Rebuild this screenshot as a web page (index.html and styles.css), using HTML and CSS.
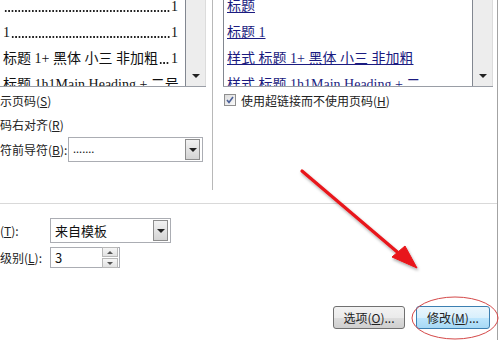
FILE: index.html
```html
<!DOCTYPE html>
<html lang="zh-CN">
<head>
  <meta charset="UTF-8">
  <title>目录</title>
  <link rel="stylesheet" href="styles.css">
</head>
<body>
  <div class="dialog">
    <div class="top">
      <div class="print-pane">
        <div class="listbox">
          <div class="list-items">
            <div class="rows">
              <div class="row"><span class="lead"></span><span>1</span></div>
              <div class="row"><span>1</span><span class="lead"></span><span>1</span></div>
              <div class="row"><span>标题 1+ 黑体 小三 非加粗</span><span class="lead"></span><span>1</span></div>
              <div class="row"><span>标题 1h1Main Heading + 二号</span></div>
            </div>
          </div>
          <div class="scrollbar"><span class="arrow-down"></span></div>
        </div>
        <div class="opt-row">示页码(<u>S</u>)</div>
        <div class="opt-row">码右对齐(<u>R</u>)</div>
        <div class="field-row">
          <span class="field-label">符前导符(<u>B</u>):</span>
          <div class="select leader-select">
            <span class="select-text">.......</span>
            <span class="select-btn"><span class="arrow-down"></span></span>
          </div>
        </div>
      </div>
      <div class="web-pane">
        <div class="listbox web-list">
          <div class="list-items">
            <div class="rows">
              <div class="row link">标题</div>
              <div class="row link">标题 1</div>
              <div class="row link">样式 标题 1+ 黑体 小三 非加粗</div>
              <div class="row link">样式 标题 1h1Main Heading + 二</div>
            </div>
          </div>
          <div class="scrollbar"><span class="arrow-down"></span></div>
        </div>
        <div class="check-row">
          <span class="checkbox">
            <svg width="8" height="8" viewBox="0 0 8 8"><path d="M1 4 L3 6.5 L7 1" fill="none" stroke="#4a5f97" stroke-width="1.6"/></svg>
          </span>
          <span>使用超链接而不使用页码(<u>H</u>)</span>
        </div>
      </div>
    </div>

    <div class="hr"></div>

    <div class="general">
      <div class="field-row format-row">
        <span class="field-label short">(<u>T</u>):</span>
        <div class="select format-select">
          <span class="select-text">来自模板</span>
          <span class="select-btn"><span class="arrow-down"></span></span>
        </div>
      </div>
      <div class="field-row level-row">
        <span class="field-label short">级别(<u>L</u>):</span>
        <div class="spinner">
          <span class="select-text">3</span>
          <span class="spin-btns">
            <span class="spin-btn"><span class="arrow-up"></span></span>
            <span class="spin-btn"><span class="arrow-down small"></span></span>
          </span>
        </div>
      </div>
    </div>

    <div class="buttons">
      <button class="btn">选项(<u>O</u>)...</button>
      <button class="btn hot">修改(<u>M</u>)...</button>
    </div>
  </div>

  <svg class="annotation" width="500" height="340" viewBox="0 0 500 340">
    <defs>
      <filter id="shadow" x="-20%" y="-20%" width="140%" height="140%">
        <feDropShadow dx="1" dy="2" stdDeviation="1.5" flood-color="#000" flood-opacity="0.35"/>
      </filter>
    </defs>
    <g filter="url(#shadow)" fill="#e8141a" stroke="#e8141a">
      <line x1="302" y1="171" x2="402" y2="256" stroke-width="3.2" stroke-linecap="round"/>
      <polygon points="392,257 405,246 417,268" stroke-width="1" stroke-linejoin="round"/>
    </g>
    <ellipse cx="455" cy="318" rx="43" ry="21" fill="none" stroke="#d44848" stroke-width="1"/>
  </svg>
</body>
</html>
```

FILE: styles.css
```css
body {
  margin: 0;
  width: 500px;
  height: 340px;
  overflow: hidden;
  position: relative;
  background: #fff;
  font-family: "Noto Sans CJK SC", "Liberation Sans", sans-serif;
  font-size: 12px;
  color: #222;
}
u {
  text-decoration: underline;
}
.dialog {
  width: 498px;
  height: 340px;
  border-right: 1px solid #a3a3a3;
  box-sizing: border-box;
}
.top {
  display: flex;
  height: 190px;
}
.print-pane {
  width: 212px;
  border-right: 1px solid #b8b8b8;
}
.web-pane {
  flex: 1;
  padding-left: 10px;
}

/* list boxes */
.listbox {
  display: flex;
  height: 87px;
  width: 206px;
  border-bottom: 1px solid #9a9ea6;
  box-sizing: border-box;
}
.list-items {
  width: 185px;
  border-right: 1px solid #828790;
  overflow: hidden;
  font-family: "Liberation Serif", "Noto Sans CJK SC", serif;
  font-size: 14px;
  color: #111;
}
.rows {
  margin-top: -6px;
}
.row {
  display: flex;
  height: 26px;
  line-height: 26px;
  padding: 0 7px 0 3px;
  white-space: nowrap;
}
/* dotted tab leader */
.lead {
  flex: 1;
  align-self: flex-start;
  height: 2px;
  margin: 16px 1px 0;
  background-image: radial-gradient(circle, #222 45%, transparent 55%);
  background-size: 3.4px 2px;
  background-repeat: repeat-x;
}
.scrollbar {
  width: 20px;
  background: #ededed;
  border-right: 1px solid #dcdcdc;
  display: flex;
  flex-direction: column;
  justify-content: flex-end;
  align-items: center;
  padding-bottom: 8px;
  box-sizing: border-box;
}
.arrow-down {
  width: 0;
  height: 0;
  border-left: 4px solid transparent;
  border-right: 4px solid transparent;
  border-top: 4px solid #222;
}
.arrow-down.small {
  border-left-width: 3px;
  border-right-width: 3px;
  border-top: 3px solid #555;
}
.arrow-up {
  width: 0;
  height: 0;
  border-left: 3px solid transparent;
  border-right: 3px solid transparent;
  border-bottom: 3px solid #555;
}
.web-list {
  width: 270px;
}
.web-list .list-items {
  width: 251px;
  border-left: 1px solid #828790;
}
.row.link {
  display: block;
  padding-left: 3px;
  color: #1b1b80;
  text-decoration: underline;
}

/* options */
.opt-row {
  height: 24px;
  line-height: 24px;
  margin-top: 2px;
  white-space: nowrap;
}
.opt-row + .opt-row {
  margin-top: 0;
}
.field-row {
  display: flex;
  align-items: center;
  white-space: nowrap;
}
.field-label {
  width: 68px;
}
.field-label.short {
  width: 50px;
}
.select {
  display: flex;
  align-items: center;
  justify-content: space-between;
  height: 25px;
  border: 1px solid #abadb3;
  box-sizing: border-box;
  background: #fff;
}
.select-text {
  padding-left: 4px;
  font-size: 13px;
  color: #111;
}
.select-btn {
  width: 15px;
  height: 21px;
  margin-right: 2px;
  border: 1px solid #8d8d8d;
  box-sizing: border-box;
  background: linear-gradient(#f2f2f2, #d4d4d4);
  display: flex;
  align-items: center;
  justify-content: center;
}
.leader-select {
  width: 135px;
}
.leader-select .select-text {
  font-size: 11px;
  padding-bottom: 4px;
}
.check-row {
  display: flex;
  align-items: center;
  height: 26px;
  padding-left: 1px;
  white-space: nowrap;
}
.checkbox {
  width: 12px;
  height: 12px;
  margin-right: 5px;
  border: 1px solid #8f8f8f;
  box-sizing: border-box;
  background: linear-gradient(135deg, #dcdcdc, #fafafa);
  display: flex;
  align-items: center;
  justify-content: center;
}

.hr {
  height: 1px;
  margin-top: 13px;
  background: #d9d9d9;
}

/* general */
.format-row {
  margin-top: 14px;
}
.format-select {
  width: 121px;
}
.level-row {
  margin-top: 4px;
}
.spinner {
  display: flex;
  align-items: center;
  justify-content: space-between;
  width: 70px;
  height: 21px;
  border: 1px solid #abadb3;
  box-sizing: border-box;
}
.spin-btns {
  display: flex;
  flex-direction: column;
  gap: 1px;
  margin-right: 1px;
}
.spin-btn {
  width: 14px;
  height: 8px;
  border: 1px solid #b8b8b8;
  background: linear-gradient(#f6f6f6, #e2e2e2);
  display: flex;
  align-items: center;
  justify-content: center;
}

/* buttons */
.buttons {
  display: flex;
  justify-content: flex-end;
  gap: 11px;
  margin-top: 38px;
  padding-right: 7px;
}
.btn {
  height: 23px;
  padding: 0;
  font-family: "Noto Sans CJK SC", sans-serif;
  font-size: 12px;
  color: #222;
  border: 1px solid #707070;
  border-radius: 3px;
  background: linear-gradient(#f2f2f2 0%, #ebebeb 50%, #dddddd 51%, #cfcfcf 100%);
  width: 72px;
}
.btn.hot {
  width: 74px;
  border-color: #3c7fb1;
  background: linear-gradient(#eaf6fd 0%, #d9f0fc 50%, #bee6fd 51%, #a7d9f5 100%);
}

.annotation {
  position: absolute;
  top: 0;
  left: 0;
  pointer-events: none;
}
```
